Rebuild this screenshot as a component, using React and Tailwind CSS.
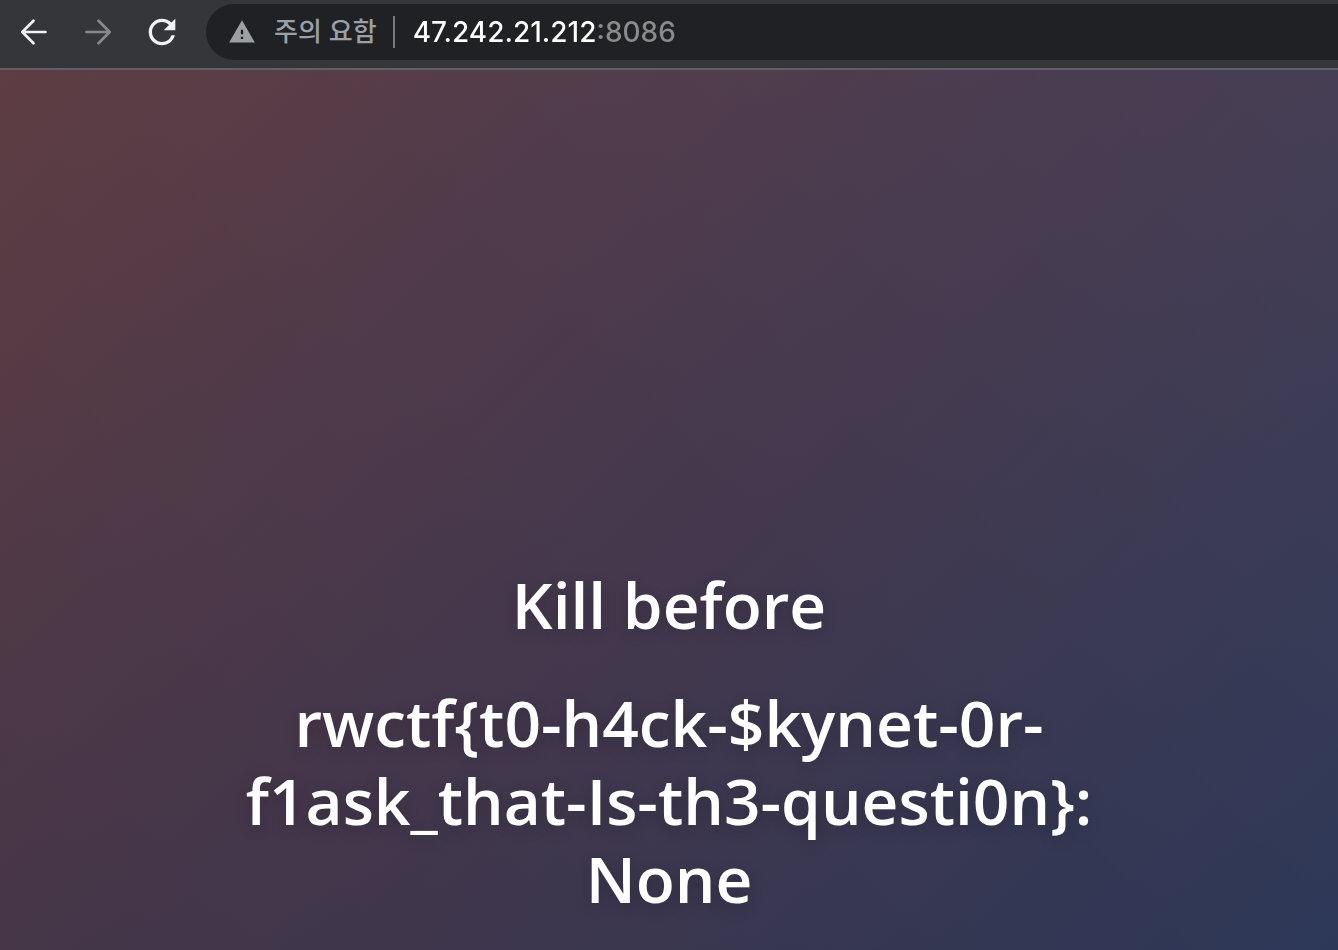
import React from "react";
import { MdRefresh, MdWarning } from "react-icons/md";

const HOST = "47.242.21.212";
const PORT = ":8086";
const FLAG = "rwctf{t0-h4ck-$kynet-0r-f1ask_that-Is-th3-questi0n}";

function Arrow({ className }) {
    return (
        <svg viewBox="0 0 28 28" fill="none" stroke="currentColor" strokeWidth="2.7" strokeLinecap="round" strokeLinejoin="round" className={className}>
            <path d="M25.5 14H2.5M13.5 2.8L2.3 14l11.2 11.2" />
        </svg>
    );
}

function Toolbar() {
    return (
        <header className="flex items-center border-b-2 border-[#5f6164] bg-[#35363a] pt-1 pb-2 pl-5">
            <nav className="flex items-center gap-9">
                <button type="button" aria-label="Back" className="text-[#f1f3f4]"><Arrow className="size-7" /></button>
                <button type="button" aria-label="Forward" className="text-[#87898b]"><Arrow className="size-7 rotate-180" /></button>
                <button type="button" aria-label="Reload" className="text-[#f1f3f4]"><MdRefresh className="-mx-1.5 size-10" /></button>
            </nav>

            {/* Address bar */}
            <div className="ml-[30px] flex h-14 min-w-0 flex-1 items-center rounded-l-full bg-[#202124] pl-[22px] font-['Inter','Noto_Sans_CJK_KR',sans-serif]">
                <button type="button" className="flex shrink-0 items-center gap-[18px] text-[#9aa0a6]">
                    <MdWarning className="size-7" />
                    <span className="text-[26px] leading-8 font-medium">주의 요함</span>
                </button>
                <span className="mr-[18px] ml-4 h-8 w-0.5 shrink-0 bg-[#77797c]" />
                <input
                    type="text"
                    aria-label="Address"
                    defaultValue={HOST + PORT}
                    className="h-10 min-w-0 flex-1 bg-linear-to-r from-white from-[186px] to-[#8a8b8d] to-[186px] bg-clip-text text-[28px] font-medium text-transparent caret-white outline-none"
                />
            </div>
        </header>
    );
}

export default function App() {
    return (
        <div className="flex min-h-screen flex-col">
            <Toolbar />
            <main className="flex flex-1 flex-col items-center justify-end bg-[linear-gradient(45deg,rgb(0_0_0/0.06),rgb(0_0_0/0)_50%,rgb(255_255_255/0.03)),linear-gradient(136deg,#5f3e44_0%,#4a394c_40%,#40384f_60%,#2c3757_100%)] px-6 pb-8 text-center font-['Open_Sans','Noto_Sans',sans-serif] text-[64px] leading-[78px] font-semibold text-white text-shadow-[0_4px_16px_rgb(0_0_0/0.2)]">
                <h1>Kill before</h1>
                <p className="mt-10 max-w-4xl">{`${FLAG}: None`}</p>
            </main>
        </div>
    );
}
